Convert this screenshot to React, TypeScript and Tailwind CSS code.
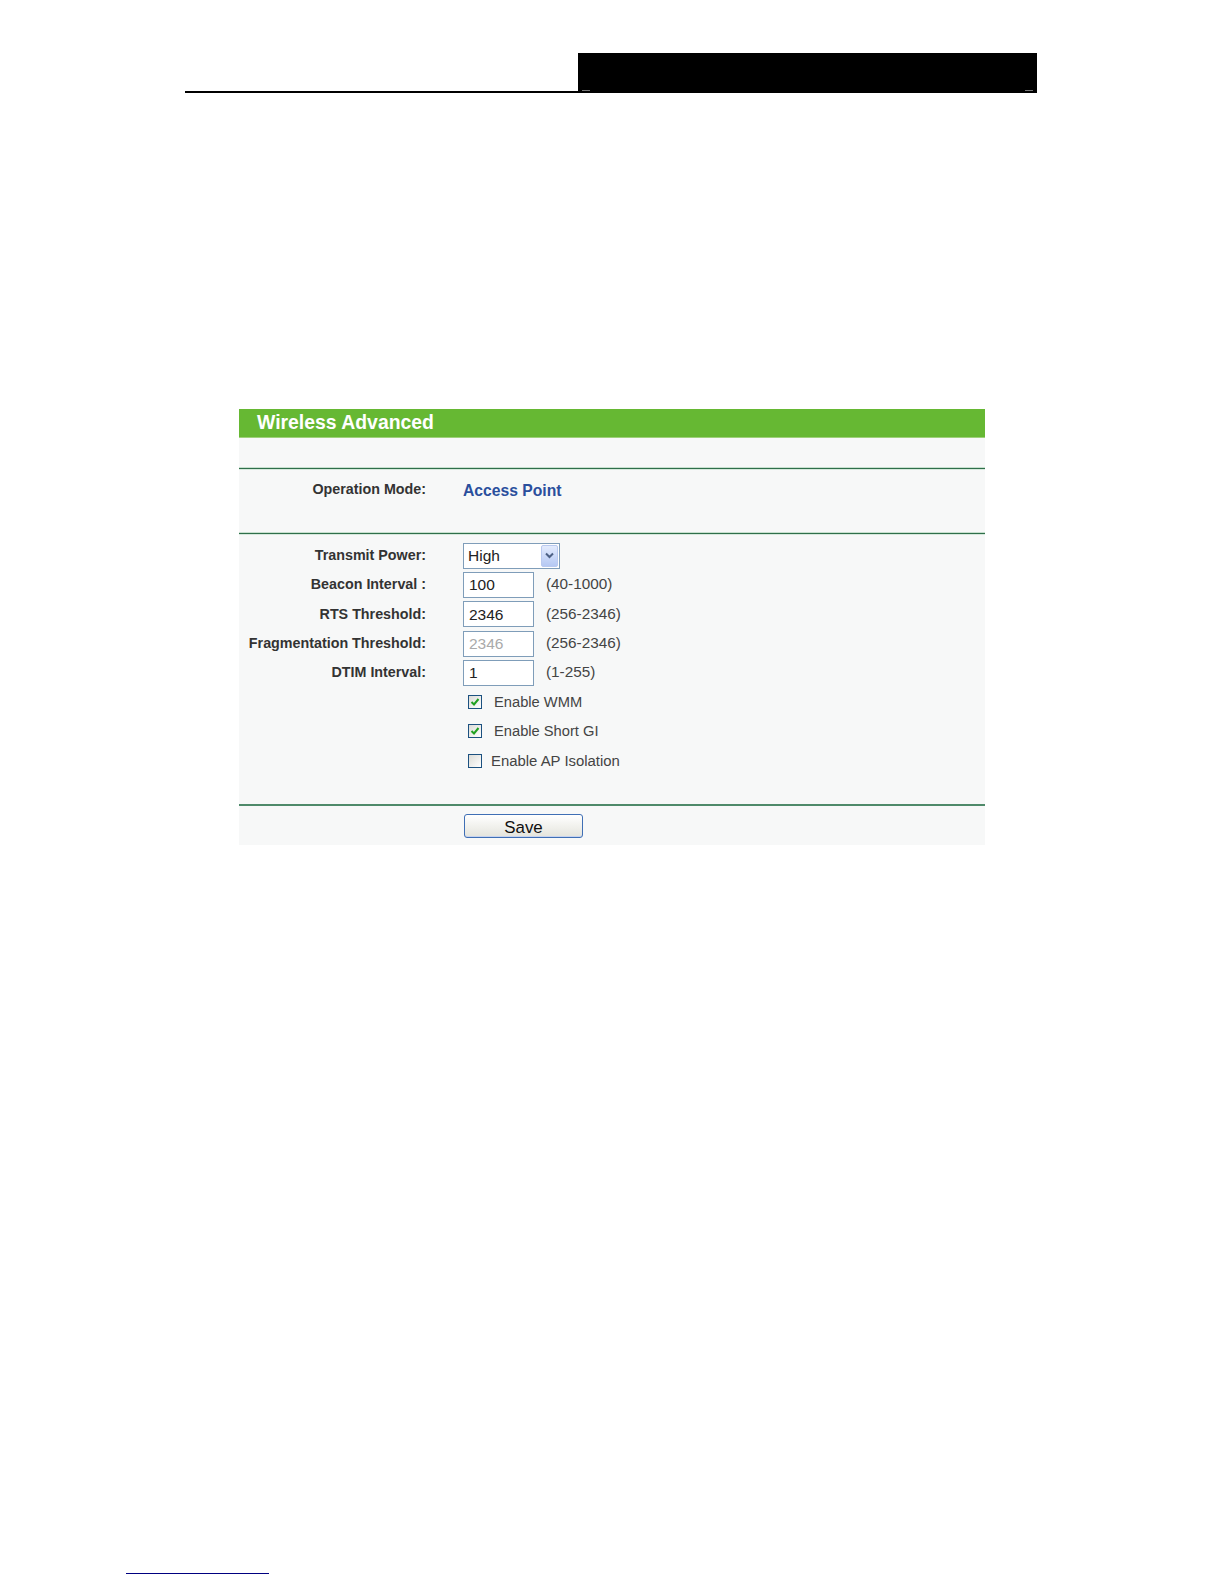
import React from "react";

const font = { fontFamily: '"Liberation Sans", Arial, sans-serif' };

const Check = ({ checked }: { checked: boolean }) => (
  <span className="inline-flex h-[14px] w-[14px] items-center justify-center border border-[#1c5180] bg-gradient-to-br from-[#dcdcd7] to-white">
    {checked && (
      <svg width="10" height="10" viewBox="0 0 10 10">
        <path d="M1.5 5 L4 7.5 L8.5 2" fill="none" stroke="#21a121" strokeWidth="2" />
      </svg>
    )}
  </span>
);

const Row = ({ label, children }: { label?: string; children: React.ReactNode }) => (
  <div className="flex h-[29.3px] items-center">
    <div className="w-[187px] text-right text-[14.3px] font-bold text-[#333]">{label}</div>
    <div className="ml-[37px] flex items-center">{children}</div>
  </div>
);

const Field = ({ value, range, disabled }: { value: string; range: string; disabled?: boolean }) => (
  <>
    <div
      className={`flex h-[26px] w-[71px] items-center border border-[#7f9db9] bg-white px-[5px] text-[15.5px] ${
        disabled ? "text-[#aaa]" : "text-[#222]"
      }`}
    >
      {value}
    </div>
    <span className="ml-[12px] text-[15.3px] text-[#444]">{range}</span>
  </>
);

const Divider = () => (
  <div className="h-[3px] border-t border-[#c8e0cf] bg-[#2f6f4a] border-b border-b-[#d6e8dc]" />
);

export default function App() {
  return (
    <div className="min-h-[1584px] bg-white" style={font}>
      <div className="pt-[53px]">
        <div className="ml-[185px] flex h-[40px] w-[852px]">
          <div className="flex-1 border-b-2 border-black" />
          <div className="relative w-[459px] bg-black">
            <span className="absolute bottom-[2px] left-[4px] h-px w-[8px] bg-[#777]" />
            <span className="absolute bottom-[2px] right-[4px] h-px w-[8px] bg-[#777]" />
          </div>
        </div>
      </div>

      <div className="ml-[239px] mt-[316px] w-[746px] bg-[#f7f8f8]">
        <div className="flex h-[29px] items-center border-b border-[#9ed07a] bg-[#66b833] pl-[18px] text-[19.4px] font-bold text-white">
          Wireless Advanced
        </div>
        <div className="h-[29px]" />
        <Divider />
        <div className="flex h-[62px] items-start pt-[9px]">
          <div className="w-[187px] text-right text-[14.3px] font-bold text-[#333]">Operation Mode:</div>
          <div className="ml-[37px] text-[15.7px] font-bold text-[#2a4f9d]">Access Point</div>
        </div>
        <Divider />
        <div className="pb-[29px] pt-[6px]">
          <Row label="Transmit Power:">
            <div className="flex h-[26px] w-[97px] items-center border border-[#7f9db9] bg-white">
              <span className="flex-1 pl-[4px] text-[15.5px] text-[#222]">High</span>
              <span className="mr-px flex h-[22px] w-[17px] items-center justify-center rounded-[2px] border border-[#b9c9ef] bg-gradient-to-b from-[#e3ebfd] to-[#b5c8f3]">
                <svg width="9" height="7" viewBox="0 0 9 7">
                  <path d="M1 1.5 L4.5 5 L8 1.5" fill="none" stroke="#4d6185" strokeWidth="2" />
                </svg>
              </span>
            </div>
          </Row>
          <Row label="Beacon Interval :">
            <Field value="100" range="(40-1000)" />
          </Row>
          <Row label="RTS Threshold:">
            <Field value="2346" range="(256-2346)" />
          </Row>
          <Row label="Fragmentation Threshold:">
            <Field value="2346" range="(256-2346)" disabled />
          </Row>
          <Row label="DTIM Interval:">
            <Field value="1" range="(1-255)" />
          </Row>
          <Row>
            <span className="ml-[5px] flex items-center">
              <Check checked />
              <span className="ml-[12px] text-[14.7px] text-[#444]">Enable WMM</span>
            </span>
          </Row>
          <Row>
            <span className="ml-[5px] flex items-center">
              <Check checked />
              <span className="ml-[12px] text-[14.7px] text-[#444]">Enable Short GI</span>
            </span>
          </Row>
          <Row>
            <span className="ml-[5px] flex items-center">
              <Check checked={false} />
              <span className="ml-[9px] text-[14.9px] text-[#444]">Enable AP Isolation</span>
            </span>
          </Row>
        </div>
        <div className="h-[2px] bg-[#4f8a6a]" />
        <div className="flex h-[39px] items-start pt-[8px]">
          <button className="ml-[225px] h-[24px] w-[119px] rounded-[3px] border border-[#3f6fb5] bg-gradient-to-b from-white to-[#e4e4dc] text-[16.9px] text-[#111] shadow-[inset_0_-1px_0_#c7d3ee]">
            Save
          </button>
        </div>
      </div>

      <div className="ml-[126px] mt-[728px] h-px w-[143px] bg-[#000080]" />
    </div>
  );
}
